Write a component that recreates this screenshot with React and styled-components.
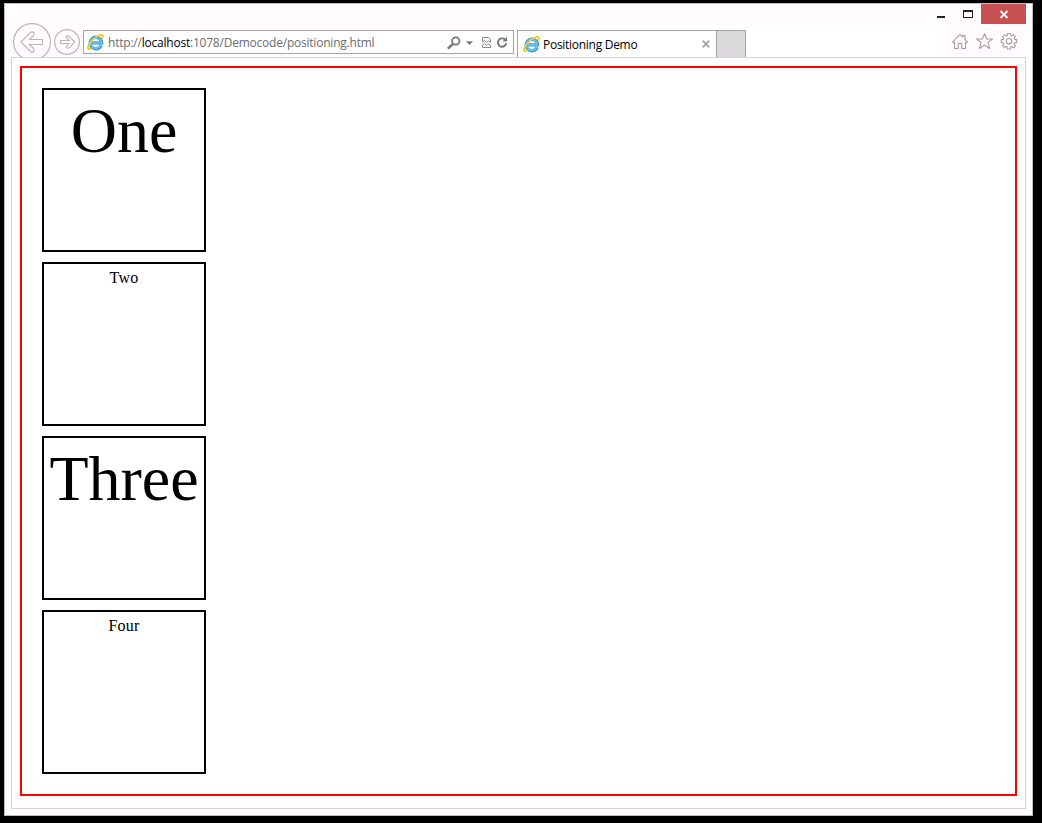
import React from "react";
import styled, { createGlobalStyle } from "styled-components";

const GlobalStyle = createGlobalStyle`
  * { box-sizing: border-box; }
  html, body { margin: 0; padding: 0; background: #000; overflow: hidden; }
  svg { display: block; flex: none; }
`;

const Desktop = styled.div`
  width: 1042px;
  height: 823px;
  padding: 3px 0 0 4px;
  background: #000;
`;

const Window = styled.div`
  width: 1029px;
  height: 813px;
  border: 1px solid #bfbfbf;
  background: #fffbff;
  display: flex;
  flex-direction: column;
`;

const TitleBar = styled.div`
  height: 19px;
  display: flex;
  justify-content: flex-end;
  padding-right: 6px;
`;

const CaptionButton = styled.div`
  width: ${(p) => p.$width}px;
  height: 20px;
  background: ${(p) => (p.$danger ? "#c75050" : "transparent")};
`;

const Toolbar = styled.div`
  height: 34px;
  display: flex;
  align-items: flex-start;
  padding-left: 7px;
`;

const NavButtons = styled.div`
  width: 71px;
  height: 34px;
  overflow: hidden;
`;

const AddressBar = styled.div`
  width: 431px;
  height: 24px;
  margin-top: 7px;
  border: 1px solid #a6a3a6;
  background: #fff;
  display: flex;
  align-items: center;
  padding-left: 3px;
`;

const Url = styled.div`
  width: 338px;
  padding-top: 1px;
  margin-left: 4px;
  font: 12px/22px "Open Sans", sans-serif;
  letter-spacing: -0.22px;
  color: #6d6d6d;
  white-space: nowrap;
`;

const Host = styled.span`
  color: #000;
`;

const TabStrip = styled.div`
  width: 428px;
  height: 34px;
  padding: 7px 0 0 3px;
  display: flex;
  background: linear-gradient(#fff, #fff) 3px 0 no-repeat;
`;

const Tab = styled.div`
  width: 200px;
  height: 27px;
  border: 1px solid #a6a3a6;
  border-bottom: 0;
  background: #fff;
  display: flex;
  align-items: flex-start;
  padding: 5px 0 0 5px;
`;

const TabTitle = styled.div`
  width: 159px;
  margin-left: 3px;
  font: 12px/18px "Open Sans", sans-serif;
  letter-spacing: -0.28px;
  color: #000;
  white-space: nowrap;
`;

const NewTab = styled.div`
  width: 29px;
  height: 27px;
  border: 1px solid #a6a3a6;
  border-left: 0;
  border-bottom: 0;
  background: #dad8db;
`;

const Tools = styled.div`
  display: flex;
  padding: 9px 0 0 9px;
`;

const Page = styled.div`
  width: 1015px;
  height: 752px;
  margin-left: 6px;
  border: 1px solid #d5d3d5;
  background: #fff;
  padding: 8px;
`;

const Frame = styled.div`
  width: 997px;
  height: 730px;
  border: 2px solid #f00;
  padding: 20px;
  display: flex;
  flex-direction: column;
  gap: 10px;
`;

const Box = styled.div`
  width: 164px;
  height: 164px;
  flex: none;
  border: 2px solid #000;
  padding: 5px;
  display: flex;
  justify-content: center;
  align-items: flex-start;
  font-family: "Liberation Serif", serif;
  font-size: ${(p) => (p.$large ? 64 : 16)}px;
  line-height: ${(p) => (p.$large ? 71 : 18)}px;
  letter-spacing: ${(p) => (p.$large ? 0 : 0.2)}px;
  color: #000;
`;

function BrowserLogo() {
  return (
    <svg width="17" height="17" viewBox="0 0 17 17" fill="none">
      <path d="M14.2 11.1A5.7 5.7 0 1 1 14.6 8.9H5.3" stroke="#3a9bd6" strokeWidth="3.3" />
      <path d="M13.8 11.2A5.4 5.4 0 1 1 14.3 8.7H5.3" stroke="#6cc6ee" strokeWidth="1.6" />
      <path d="M4.2 14.1C1.8 15.9.4 15.4 1.2 12.6 2.5 8.3 8.2 2.3 13.1 1c2.7-.7 3.3.8 2.1 3.4" stroke="#f3c01f" strokeWidth="1.7" />
      <path d="M1.4 12C3 8 7.8 3 12.4 1.4" stroke="#ffdc58" strokeWidth=".7" />
    </svg>
  );
}

function NavIcons() {
  return (
    <svg width="71" height="38" viewBox="12 23 71 38" fill="none" stroke="#b9b6b9">
      <circle cx="32" cy="42" r="18.4" strokeWidth="1.2" />
      <path d="M21 42 30.6 32.4Q32.6 31.3 34 33 34.7 34 33.5 35.5L29.5 39.5H42.5V44.5H29.5L33.5 48.5Q34.7 50 34 51 32.6 52.7 30.6 51.6Z" strokeWidth="1.2" />
      <circle cx="67" cy="42" r="12.4" strokeWidth="1.2" />
      <path d="M74.7 42 69 36.2Q67.6 35.3 66.6 36.4 66 37.2 66.8 38.2L69 40.5H60.5V43.5H69L66.8 45.8Q66 46.8 66.6 47.6 67.6 48.7 69 47.8Z" strokeWidth="1.2" />
    </svg>
  );
}

function AddressIcons() {
  return (
    <svg width="63" height="16" viewBox="446 34 63 16" fill="none">
      <circle cx="455.8" cy="41" r="3.7" stroke="#777" strokeWidth="1.8" />
      <path d="M453 44 447.8 48.6" stroke="#777" strokeWidth="2.4" />
      <path d="M466 41.2H473L469.5 45Z" fill="#777" />
      <path d="M482.5 42V37.5H488.5L490.5 39.5V42M482.5 45V47.5H490.5V45" stroke="#888" />
      <path d="M482.3 42.2 484.5 40.4 486.5 42.4 488.5 40.8 490.7 42.6M482.3 45.2 484.5 43.4 486.5 45.4 488.5 43.8 490.7 45.6" stroke="#888" />
      <path d="M504.8 39.3A4.2 4.2 0 1 0 506.3 43.2" stroke="#777" strokeWidth="1.9" />
      <path d="M502.4 41.6H507V36.8Z" fill="#777" />
    </svg>
  );
}

function TabClose() {
  return (
    <svg width="8" height="8" viewBox="0 0 8 8">
      <path d="M.8.8 7.2 7.2M7.2.8.8 7.2" stroke="#aaa" strokeWidth="2" />
    </svg>
  );
}

const CloseSlot = styled.div`
  padding-top: 4px;
`;

const GEAR = (() => {
  const points = [];
  for (let i = 0; i < 8; i++) {
    const middle = (i * Math.PI) / 4;
    [[-0.27, 6], [-0.2, 7.9], [0.2, 7.9], [0.27, 6]].forEach(([offset, radius]) => {
      points.push(
        `${(1009 + radius * Math.cos(middle + offset)).toFixed(2)},${(41.2 + radius * Math.sin(middle + offset)).toFixed(2)}`
      );
    });
  }
  return points.join(" ");
})();

function ToolIcons() {
  return (
    <svg width="68" height="18" viewBox="951 32 68 18" fill="none" stroke="#a3a1a3" strokeWidth="1.1" strokeLinejoin="round">
      <path d="M952.6 41.8 960 34.4 962.7 37V35.5H965V39.4L967.5 41.8 966.3 43 965.5 42.3V48.5H961.8V43.5H958.2V48.5H954.5V42.3L953.7 43Z" />
      <path d="M984.5 33.7 986.7 39H992.5L987.9 42.6 989.7 48.5 984.5 45 979.3 48.5 981.1 42.6 976.5 39H982.3Z" />
      <polygon points={GEAR} />
      <circle cx="1009" cy="41.2" r="2.7" />
    </svg>
  );
}

export default function App() {
  return (
    <>
      <GlobalStyle />
      <Desktop>
        <Window>
          <TitleBar>
            <CaptionButton $width={26}>
              <svg width="26" height="20">
                <path d="M8 12H16V14H8Z" fill="#222" />
              </svg>
            </CaptionButton>
            <CaptionButton $width={26}>
              <svg width="26" height="20">
                <path fillRule="evenodd" d="M8 6H18V14H8ZM9 8V13H17V8Z" fill="#222" />
              </svg>
            </CaptionButton>
            <CaptionButton $width={45} $danger>
              <svg width="45" height="20">
                <path d="M19.5 7 26.5 14M26.5 7 19.5 14" stroke="#fff" strokeWidth="1.8" />
              </svg>
            </CaptionButton>
          </TitleBar>
          <Toolbar>
            <NavButtons>
              <NavIcons />
            </NavButtons>
            <AddressBar>
              <BrowserLogo />
              <Url>
                http://<Host>localhost</Host>:1078/Democode/positioning.html
              </Url>
              <AddressIcons />
            </AddressBar>
            <TabStrip>
              <Tab>
                <BrowserLogo />
                <TabTitle>Positioning Demo</TabTitle>
                <CloseSlot>
                  <TabClose />
                </CloseSlot>
              </Tab>
              <NewTab />
            </TabStrip>
            <Tools>
              <ToolIcons />
            </Tools>
          </Toolbar>
          <Page>
            <Frame>
              <Box $large>One</Box>
              <Box>Two</Box>
              <Box $large>Three</Box>
              <Box>Four</Box>
            </Frame>
          </Page>
        </Window>
      </Desktop>
    </>
  );
}
